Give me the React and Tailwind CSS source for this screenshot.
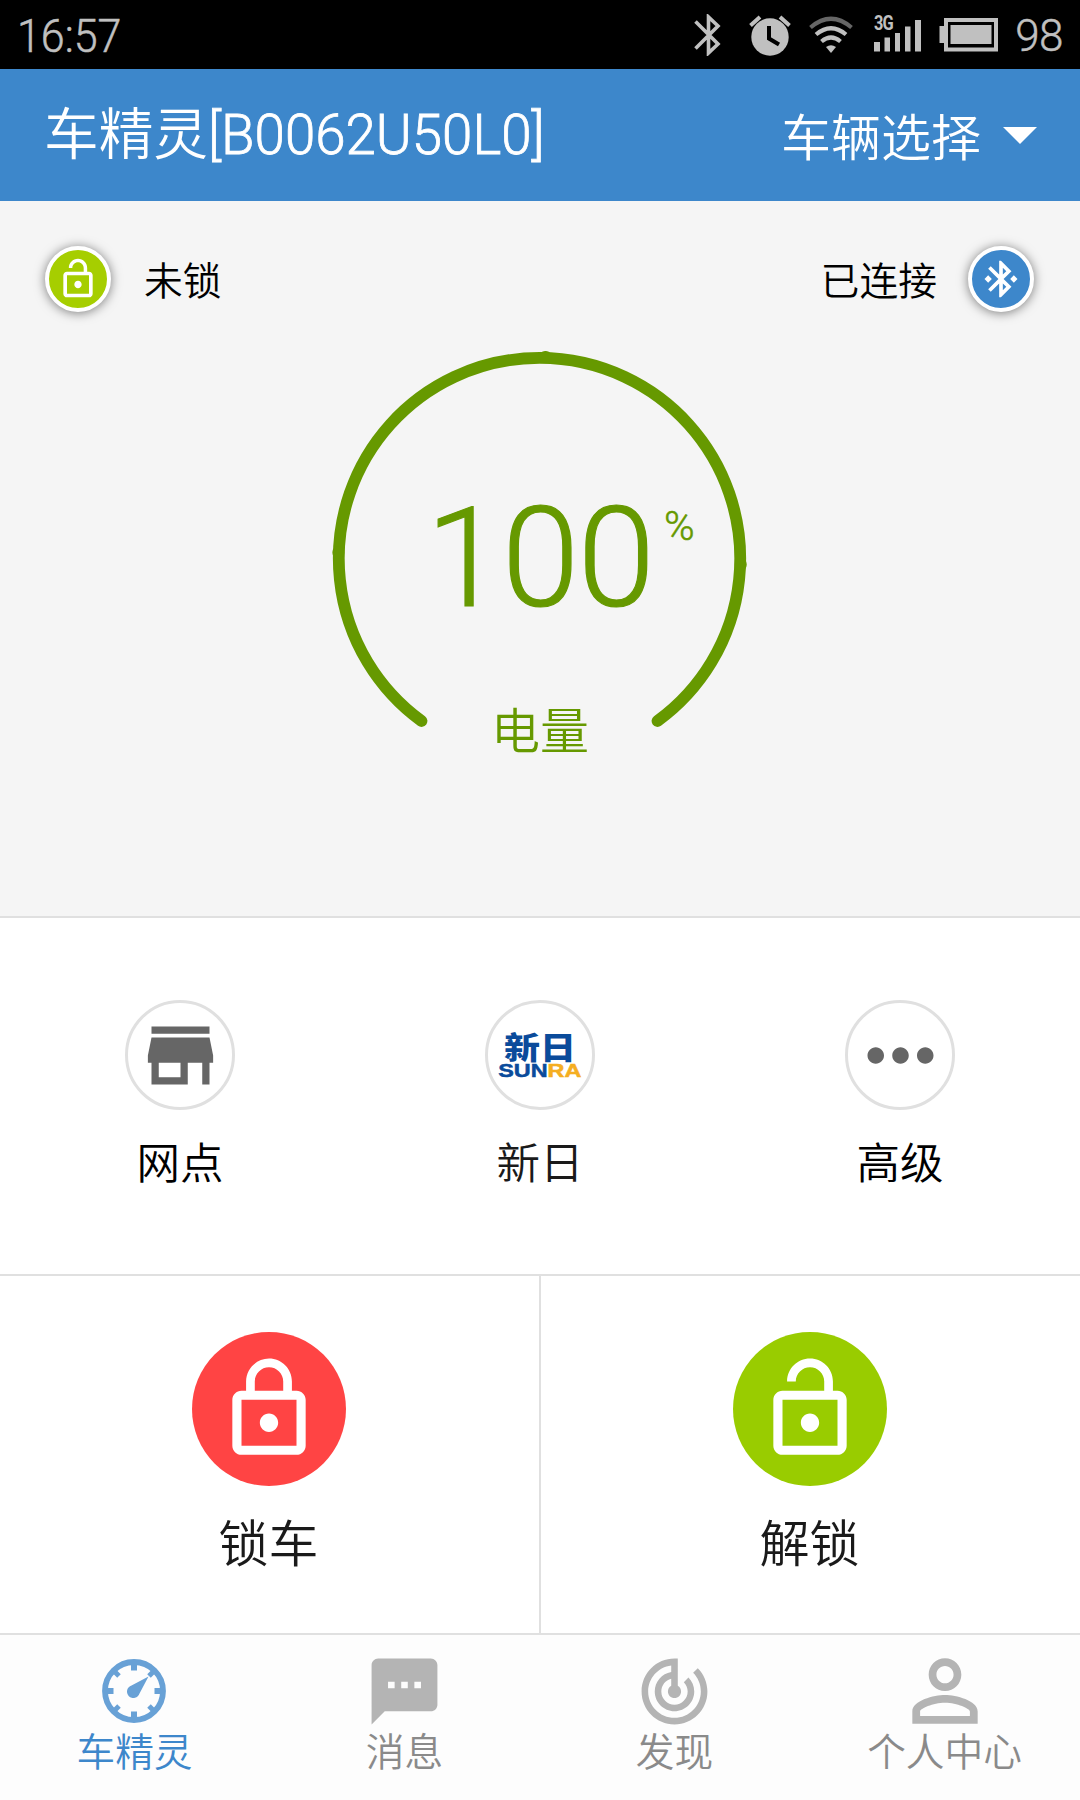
import React, { useState } from "react";

const LOCK_OPEN =
  "M12 17c1.1 0 2-.9 2-2s-.9-2-2-2-2 .9-2 2 .9 2 2 2zm6-9h-1V6c0-2.76-2.24-5-5-5S7 3.24 7 6h1.9c0-1.71 1.39-3.1 3.1-3.1 1.71 0 3.1 1.39 3.1 3.1v2H6c-1.1 0-2 .9-2 2v10c0 1.1.9 2 2 2h12c1.1 0 2-.9 2-2V10c0-1.1-.9-2-2-2zm0 12H6V10h12v10z";
const LOCK_CLOSED =
  "M12 17c1.1 0 2-.9 2-2s-.9-2-2-2-2 .9-2 2 .9 2 2 2zm6-9h-1V6c0-2.76-2.24-5-5-5S7 3.24 7 6v2H6c-1.1 0-2 .9-2 2v10c0 1.1.9 2 2 2h12c1.1 0 2-.9 2-2V10c0-1.1-.9-2-2-2zM8.9 6c0-1.71 1.39-3.1 3.1-3.1s3.1 1.39 3.1 3.1v2H8.9V6zM18 20H6V10h12v10z";
const BLUETOOTH =
  "M17.71 7.71L12 2h-1v7.59L6.41 5 5 6.41 10.59 12 5 17.59 6.41 19 11 14.41V22h1l5.71-5.71-4.3-4.29 4.3-4.29zM13 5.83l1.88 1.88L13 9.59V5.83zm1.88 10.46L13 18.17v-3.76l1.88 1.88z";
const STORE =
  "M20 4H4v2h16V4zm1 10v-2l-1-5H4l-1 5v2h1v6h10v-6h4v6h2v-6h1zm-9 4H6v-4h6v4z";
const MORE =
  "M6 10c-1.1 0-2 .9-2 2s.9 2 2 2 2-.9 2-2-.9-2-2-2zm12 0c-1.1 0-2 .9-2 2s.9 2 2 2 2-.9 2-2-.9-2-2-2zm-6 0c-1.1 0-2 .9-2 2s.9 2 2 2 2-.9 2-2-.9-2-2-2z";
const MESSAGE =
  "M20 2H4c-1.1 0-2 .9-2 2v18l4-4h14c1.1 0 2-.9 2-2V4c0-1.1-.9-2-2-2zM9 11H7V9h2v2zm4 0h-2V9h2v2zm4 0h-2V9h2v2z";
const RADAR =
  "M19.07 4.93l-1.41 1.41C19.1 7.79 20 9.79 20 12c0 4.42-3.58 8-8 8s-8-3.58-8-8c0-4.08 3.05-7.44 7-7.93v2.02C8.16 6.57 6 9.03 6 12c0 3.31 2.69 6 6 6s6-2.69 6-6c0-1.66-.67-3.16-1.76-4.24l-1.41 1.41C15.55 9.9 16 10.9 16 12c0 2.21-1.79 4-4 4s-4-1.79-4-4c0-1.86 1.28-3.41 3-3.86v2.14c-.6.35-1 .98-1 1.72 0 1.1.9 2 2 2s2-.9 2-2c0-.74-.4-1.38-1-1.72V2h-1C6.48 2 2 6.48 2 12s4.48 10 10 10 10-4.48 10-10c0-2.76-1.12-5.26-2.93-7.07z";
const PERSON =
  "M12 5.9c1.16 0 2.1.94 2.1 2.1s-.94 2.1-2.1 2.1S9.9 9.16 9.9 8s.94-2.1 2.1-2.1m0 9c2.97 0 6.1 1.46 6.1 2.1v1.1H5.9V17c0-.64 3.13-2.1 6.1-2.1M12 4C9.79 4 8 5.79 8 8s1.79 4 4 4 4-1.79 4-4-1.79-4-4-4zm0 9c-2.67 0-8 1.34-8 4v3h16v-3c0-2.66-5.33-4-8-4z";

function Icon({ path, className }) {
  return (
    <svg viewBox="0 0 24 24" fill="currentColor" className={`shrink-0 ${className}`}>
      <path d={path} />
    </svg>
  );
}

function StatusBar() {
  return (
    <div className="h-[69px] bg-black text-[#c0c0c0] flex items-center justify-between">
      <span className="ml-[17px] text-[46px] leading-[69px] origin-left scale-x-[0.935] mt-[3px] [-webkit-text-stroke:0.5px]">
        16:57
      </span>
      <div className="flex items-center mr-[17px]">
        <svg width="28" height="42" viewBox="0 0 28 42" fill="none" stroke="currentColor" strokeWidth="3.6">
          <path d="M1.5 7.5L24 30L14.500 39V3L24 12L1.500 34.500" />
        </svg>
        <svg className="ml-[27px]" width="42" height="42" viewBox="0 0 42 42">
          <circle cx="21" cy="23" r="18.700" fill="currentColor" />
          <path d="M1.500 11.500L11 3M40.500 11.500L31 3" stroke="currentColor" strokeWidth="4" />
          <path d="M20 12V24.500L30 30.500" fill="none" stroke="#000" strokeWidth="4" />
        </svg>
        <svg className="ml-[18px]" width="44" height="38" viewBox="0 0 44 38" fill="none" stroke="currentColor" strokeWidth="4.200">
          <path d="M1.500 11.500Q22 -6 42.500 11.500" stroke="#666" />
          <path d="M7 18.500Q22 6 37 18.500" />
          <path d="M12.500 25.500Q22 17.500 31.500 25.500" />
          <path d="M17 31Q22 27.500 27 31L22 37z" fill="currentColor" stroke="none" />
        </svg>
        <div className="relative ml-[21px] w-[49px] h-[38px]">
          <svg width="49" height="38" viewBox="0 0 49 38" fill="currentColor">
            <path d="M0 26h6v9.500H0zM10.500 21.500h5.500v14h-5.500zM21 17h5v18.500h-5zM31 10.500h5.500v25H31zM41 4h6v31.500h-6z" />
          </svg>
          <span className="absolute left-0 -top-[2px] text-[20px] leading-[18px] font-bold tracking-[-1px] origin-left scale-x-[0.82]">
            3G
          </span>
        </div>
        <svg className="ml-[16px]" width="60" height="34" viewBox="0 0 60 34">
          <path d="M0.500 8h5v17h-5z" fill="currentColor" />
          <rect x="7" y="2" width="50" height="29.500" fill="none" stroke="currentColor" strokeWidth="4" />
          <rect x="11.500" y="7" width="41" height="19" fill="currentColor" />
        </svg>
        <span className="ml-[16px] mt-[3px] text-[44px] leading-[69px] tracking-[-0.5px] [-webkit-text-stroke:0.4px]">
          98
        </span>
      </div>
    </div>
  );
}

function Header() {
  return (
    <div className="h-[132px] bg-[#3d87cb] text-white flex items-center justify-between">
      <h1 className="ml-[44px] text-[56px] leading-[60px] origin-left scale-x-[0.976] whitespace-nowrap">
        车精灵<span className="[-webkit-text-stroke:0.8px]">[B0062U50L0]</span>
      </h1>
      <button className="flex items-center mr-[43px] shrink-0">
        <span className="mt-[8px] text-[50px] leading-[60px]">车辆选择</span>
        <svg className="ml-[22px]" width="34" height="17" viewBox="0 0 34 17" fill="currentColor">
          <path d="M0 0h34L17 17z" />
        </svg>
      </button>
    </div>
  );
}

function Gauge({ value }) {
  return (
    <div className="relative mx-auto w-[420px] h-[420px] text-[#669900]">
      <svg width="420" height="420" viewBox="0 0 420 420" fill="none" stroke="currentColor" strokeWidth="11.800" strokeLinecap="round">
        <path d="M91.500 372A200.700 200.700 0 1 1 327.500 372" />
        <path d="M215 7.800h1M8.300 203v1M410.800 215v1" />
      </svg>
      <span className="absolute left-[96px] top-[130px] text-[139px] leading-[160px] tracking-[-1.2px] [-webkit-text-stroke:1.2px]">
        {value}
      </span>
      <span className="absolute left-[334px] top-[152px] text-[41.500px] leading-[50px] [-webkit-text-stroke:0.5px]">
        %
      </span>
      <span className="absolute left-0 w-full text-center top-[354px] text-[49px] leading-[60px]">
        电量
      </span>
    </div>
  );
}

function Dashboard() {
  return (
    <div className="h-[717px] bg-[#f5f5f5] border-b-2 border-[#e0e0e0] pt-[45px]">
      <div className="flex items-center justify-between h-[66px] pl-[45px] pr-[46px] text-[38.800px] text-black">
        <div className="flex items-center gap-[33px]">
          <div className="w-[66px] h-[66px] rounded-full border-[4px] border-white bg-[#a6ce00] text-white flex items-center justify-center shadow-[0_1px_11px_rgba(0,0,0,0.5)]">
            <Icon path={LOCK_OPEN} className="w-[44px] h-[44px]" />
          </div>
          <span className="mt-[6px]">未锁</span>
        </div>
        <div className="flex items-center gap-[31px]">
          <span className="mt-[6px]">已连接</span>
          <div className="w-[66px] h-[66px] rounded-full border-[4px] border-white bg-[#3d87cb] text-white flex items-center justify-center shadow-[0_1px_11px_rgba(0,0,0,0.5)]">
            <Icon
              path={`${BLUETOOTH}M7 12l-2-2-2 2 2 2 2-2zM19 10l-2 2 2 2 2-2-2-2z`}
              className="w-[44px] h-[44px]"
            />
          </div>
        </div>
      </div>
      <div className="pt-[37px]">
        <Gauge value={100} />
      </div>
    </div>
  );
}

function SunraLogo() {
  return (
    <div className="flex flex-col items-center whitespace-nowrap">
      <span className="font-['Noto_Sans_CJK_SC'] font-black text-[36px] leading-[30px] text-[#0a4b9b] scale-y-[0.86]">
        新日
      </span>
      <span className="mt-[1px] font-['Liberation_Sans'] font-bold text-[19px] leading-[19px] text-[#0a4b9b] scale-x-[1.23] [-webkit-text-stroke:0.5px]">
        SUN<span className="text-[#f5ae22]">RA</span>
      </span>
    </div>
  );
}

function Shortcut({ label, labelColor, children }) {
  return (
    <div className="flex flex-col items-center pt-[82px]">
      <div className="w-[110px] h-[110px] rounded-full border-[3px] border-[#e0e0e0] text-[#666] flex items-center justify-center">
        {children}
      </div>
      <span className={`mt-[25px] text-[43.500px] leading-[60px] ${labelColor}`}>{label}</span>
    </div>
  );
}

function Action({ label, path, color, border }) {
  return (
    <button className={`flex flex-col items-center pt-[56px] pr-[2px] ${border}`}>
      <span className={`w-[154px] h-[154px] rounded-full text-white flex items-center justify-center ${color}`}>
        <Icon path={path} className="w-[110px] h-[110px]" />
      </span>
      <span className="mt-[29px] text-[50px] leading-[60px] text-[#1a1a1a]">{label}</span>
    </button>
  );
}

function Speedometer() {
  return (
    <svg className="mr-[2px]" width="64" height="64" viewBox="0 0 64 64" fill="none" stroke="currentColor">
      <circle cx="32" cy="32" r="29" strokeWidth="5.800" />
      <path d="M32 5v6.500M32 59v-6.500M5 32h6.500M59 32h-6.500" strokeWidth="6" />
      <path d="M13 13l4 4M51 51l-4-4M13 51l4-4M51 13l-4 4" strokeWidth="5" />
      <path
        d="M46.500 17.500L37.500 34.500A6.400 6.400 0 1 1 29.500 26.500z"
        fill="currentColor"
        stroke="none"
      />
    </svg>
  );
}

const tabs = [
  { label: "车精灵", icon: <Speedometer /> },
  { label: "消息", icon: <Icon path={MESSAGE} className="w-[79px] h-[79px]" /> },
  { label: "发现", icon: <Icon path={RADAR} className="w-[79px] h-[79px]" /> },
  { label: "个人中心", icon: <Icon path={PERSON} className="w-[98px] h-[98px]" /> },
];

export default function App() {
  const [activeTab, setActiveTab] = useState(0);

  return (
    <div className="w-[1080px] h-[1800px] overflow-hidden bg-white font-[350] font-[Roboto,'Noto_Sans_CJK_SC',sans-serif]">
      <StatusBar />
      <Header />
      <Dashboard />

      {/* Shortcuts */}
      <div className="grid grid-cols-3 h-[358px] border-b-2 border-[#e0e0e0]">
        <Shortcut label="网点" labelColor="text-black">
          <Icon path={STORE} className="w-[87px] h-[87px]" />
        </Shortcut>
        <Shortcut label="新日" labelColor="text-[#1a1a1a]">
          <SunraLogo />
        </Shortcut>
        <Shortcut label="高级" labelColor="text-black">
          <Icon path={MORE} className="w-[99px] h-[99px]" />
        </Shortcut>
      </div>

      {/* Lock / unlock */}
      <div className="grid grid-cols-[541px_539px] h-[357px]">
        <Action label="锁车" path={LOCK_CLOSED} color="bg-[#ff4444]" border="border-r-2 border-[#e0e0e0]" />
        <Action label="解锁" path={LOCK_OPEN} color="bg-[#99cc00]" border="" />
      </div>

      {/* Bottom tabs */}
      <div className="grid grid-cols-4 h-[167px] border-t-2 border-[#e0e0e0] bg-[#fdfdfd]">
        {tabs.map((tab, i) => (
          <button key={tab.label} onClick={() => setActiveTab(i)} className="flex flex-col items-center pt-[6px] pr-px">
            <span
              className={`h-[100px] flex items-center ${activeTab === i ? "text-[#68a1d6]" : "text-[#b4b4b4]"}`}
            >
              {tab.icon}
            </span>
            <span
              className={`-mt-[13px] text-[38.700px] leading-[50px] ${activeTab === i ? "text-[#3d87cb]" : "text-[#8a8a8a]"}`}
            >
              {tab.label}
            </span>
          </button>
        ))}
      </div>
    </div>
  );
}
